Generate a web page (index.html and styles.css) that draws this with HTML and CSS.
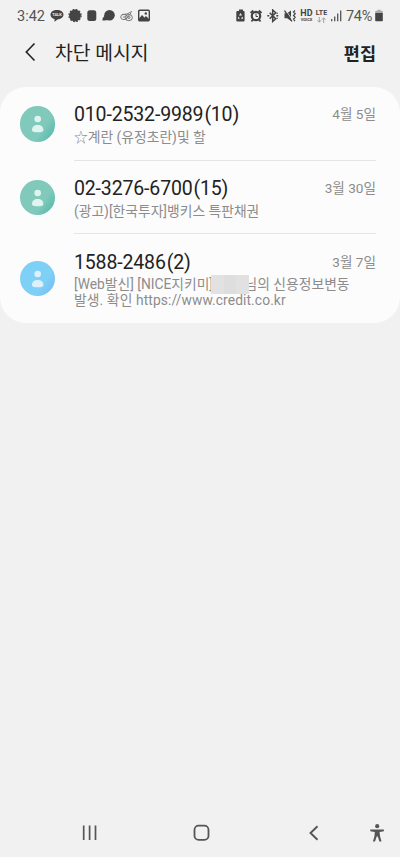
FILE: index.html
```html
<!DOCTYPE html>
<html lang="ko">
<head>
    <meta charset="UTF-8">
    <meta name="viewport" content="width=device-width, initial-scale=1.0">
    <title>차단 메시지</title>
    <link rel="stylesheet" href="styles.css">
</head>
<body>

    <!-- Shared avatar figure -->
    <svg class="defs" width="0" height="0">
        <symbol id="person" viewBox="0 0 36 36">
            <circle cx="17.7" cy="13" r="3.3"/>
            <path d="M12 24.3c0-3.5 2.200-5.300 5.700-5.300s5.700 1.800 5.700 5.300q0 2-5.700 2t-5.700-2z"/>
        </symbol>
    </svg>

    <!-- Status bar -->
    <div class="status-bar">
        <span class="clock">3:42</span>
        <div class="status-left">
            <svg width="14" height="14" viewBox="0 0 14 14">
                <path d="M7 .9c3.700 0 6.500 2 6.500 4.700S10.700 10.500 7.500 10.500L4.500 12.800V10.100C2.200 9.300.5 7.800.5 5.700.5 2.900 3.300.9 7 .9z" fill="#444"/>
                <text x="7" y="7.300" class="talk">TALK</text>
            </svg>
            <svg width="14" height="14" viewBox="0 0 14 14">
                <circle cx="7" cy="6.500" r="5.900" fill="#444"/>
                <circle cx="7" cy="6.500" r="6.100" fill="none" stroke="#444" stroke-width="1.200" stroke-dasharray="1.700 1.500"/>
            </svg>
            <svg class="square" width="10" height="14" viewBox="0 0 10 14">
                <rect x="0.300" y="1.200" width="9" height="10.800" rx="2.500" fill="#444"/>
            </svg>
            <svg width="14" height="14" viewBox="0 0 14 14">
                <circle cx="7.500" cy="6.200" r="5.300" fill="#444"/>
                <path d="M3.300 6Q.5 8.500.3 11.300q3 .5 6.500-.5z" fill="#444"/>
            </svg>
            <svg width="14" height="14" viewBox="0 0 14 14" fill="none" stroke="#777" stroke-width="1">
                <ellipse cx="4" cy="8" rx="3.300" ry="2.600"/>
                <ellipse cx="8.800" cy="8.600" rx="3.600" ry="3.100"/>
                <path d="M2 5.500l5-.5 5-2.500M6 10l5-6M3 8h2"/>
                <circle cx="9" cy="8.500" r="1"/>
            </svg>
            <svg width="12" height="14" viewBox="0 0 12 14">
                <rect x="0.700" y="1.200" width="10.600" height="10.600" rx="1" fill="none" stroke="#444" stroke-width="1.400"/>
                <path d="M1 11V9.500l3-3.500 2.500 2.500L8 7l3 3v1z" fill="#444"/>
                <circle cx="7.800" cy="4.500" r="1.200" fill="#444"/>
            </svg>
        </div>
        <div class="status-right">
            <svg width="10" height="14" viewBox="0 0 10 14">
                <path d="M3 .5h4V2h.6q1 0 1 1v8.500q0 1-1 1H1.300q-1 0-1-1V3q0-1 1-1H3z" fill="#444"/>
                <path d="M4.500 4L3 6.500h3zM2.600 7.500L1.800 9.800h2zM6.400 7.500L5 9.800h2.200z" fill="#eee"/>
            </svg>
            <svg width="13" height="14" viewBox="0 0 13 14" fill="none" stroke="#444">
                <circle cx="6" cy="7" r="4.200" stroke-width="2.200"/>
                <path d="M.6 4l2.700-2.500M11.500 4L8.800 1.500M3 10.500l-1.500 2M9 10.500l1.500 2" stroke-width="1.800"/>
                <path d="M6 4.500v3h2" stroke-width="1"/>
            </svg>
            <svg width="12" height="14" viewBox="0 0 12 14" fill="none" stroke="#444" stroke-width="1.500">
                <path d="M2.700 3.700l6 6-3 2.700V1l3 2.700-6 6"/>
                <path d="M.3 6.700h2M9.300 6.700h2M10.200 3.800v1M10.200 8.700v1"/>
            </svg>
            <svg class="mute" width="13" height="14" viewBox="0 0 13 14">
                <path d="M.5 4.200h2.700L7 1.500v10.500L3.200 9.300H.5z" fill="#444"/>
                <path d="M2 1.500l6 9" stroke="#f1f1f1" stroke-width="0.800"/>
                <path d="M.5 1.500l7.500 11" fill="none" stroke="#444" stroke-width="1.300"/>
                <path d="M11 1.500L9.500 3l1.700 1.800L9.500 6.500l1.700 1.800-1.700 1.800 1.500 2" fill="none" stroke="#444" stroke-width="1.200"/>
            </svg>
            <div class="network hd"><b>HD</b><span>VOICE</span></div>
            <div class="network lte">
                <b>LTE</b>
                <svg width="9" height="6" viewBox="0 0 9 6" fill="none" stroke="#999" stroke-width="0.900">
                    <path d="M2.300 0v5M.5 3.300l1.800 1.900 1.800-1.900M6.700 6V1M4.900 2.700L6.700.8l1.800 1.900"/>
                </svg>
            </div>
            <svg class="signal" width="11" height="14" viewBox="0 0 11 14" stroke="#555" stroke-width="1.300">
                <path d="M.7 10v2.200M3.700 7.500v4.700M6.700 4.500v7.700M9.700 1.500v10.700"/>
            </svg>
            <span class="percent">74%</span>
            <svg class="battery" width="8" height="14" viewBox="0 0 8 14">
                <path d="M2.500.8h3v1H7q.8 0 .8.800v1.700H.2V2.600q0-.8.800-.8h1.500z" fill="#aaa"/>
                <path d="M.2 4h7.600v7.500q0 .8-.8.800H1q-.8 0-.8-.8z" fill="#444"/>
            </svg>
        </div>
    </div>

    <!-- Title bar -->
    <div class="header">
        <svg class="back" width="12" height="20" viewBox="0 0 12 20">
            <path d="M10.500 1.500L2.300 10l8.200 8.500" fill="none" stroke="#222" stroke-width="1.600"/>
        </svg>
        <h1>차단 메시지</h1>
        <span class="edit">편집</span>
    </div>

    <!-- Blocked messages -->
    <div class="card">
        <div class="message">
            <div class="avatar green"><svg width="36" height="36"><use href="#person"/></svg></div>
            <div class="content">
                <div class="top-line">
                    <span class="number">010-2532-9989</span><span class="count">(10)</span>
                    <span class="date">4월 5일</span>
                </div>
                <p class="preview">☆계란 (유정초란)및 할</p>
            </div>
        </div>
        <div class="message">
            <div class="avatar green"><svg width="36" height="36"><use href="#person"/></svg></div>
            <div class="content">
                <div class="top-line">
                    <span class="number">02-3276-6700</span><span class="count">(15)</span>
                    <span class="date">3월 30일</span>
                </div>
                <p class="preview">(광고)[한국투자]뱅키스 특판채권</p>
            </div>
        </div>
        <div class="message tall">
            <div class="avatar blue"><svg width="36" height="36"><use href="#person"/></svg></div>
            <div class="content">
                <div class="top-line">
                    <span class="number">1588-2486</span><span class="count">(2)</span>
                    <span class="date">3월 7일</span>
                </div>
                <p class="preview">[Web발신] [NICE지키미]<span class="mosaic"></span>님의 신용정보변동<br><span class="url">발생. 확인 https://www.credit.co.kr</span></p>
            </div>
        </div>
    </div>

    <!-- Navigation bar -->
    <div class="nav-bar">
        <svg class="recents" width="16" height="18" viewBox="0 0 16 18" stroke="#555" stroke-width="1.700">
            <path d="M1.700 1.500v14.500M7.600 1.500v14.500M13.500 1.500v14.500"/>
        </svg>
        <svg class="home" width="18" height="18" viewBox="0 0 18 18">
            <rect x="1.500" y="1.700" width="14" height="14.200" rx="4.200" fill="none" stroke="#555" stroke-width="1.800"/>
        </svg>
        <svg class="nav-back" width="10" height="18" viewBox="0 0 10 18">
            <path d="M8.500 2.200L1.500 9l7 6.800" fill="none" stroke="#555" stroke-width="1.900"/>
        </svg>
        <svg class="access" width="16" height="18" viewBox="0 0 16 18" fill="#555">
            <circle cx="8.200" cy="2.200" r="2.100"/>
            <path d="M1.300 5.500h13.600v1.700l-4.300.8.400 4 1.500 5.400h-2.100L8.800 12.500H7.700L6 17.400H3.900l1.600-5.400.3-4-4.500-.8z"/>
        </svg>
    </div>

</body>
</html>
```
FILE: styles.css
```css
/* Global styles */
* {
    box-sizing: border-box;
}

body {
    margin: 0;
    height: 857px;
    display: flex;
    flex-direction: column;
    background-color: #f1f1f1;
    font-family: Roboto, "Noto Sans CJK KR", sans-serif;
    color: #222;
    overflow: hidden;
}

svg {
    display: block;
    flex: none;
}

.defs {
    display: none;
}

/* Status bar */
.status-bar {
    display: flex;
    align-items: center;
    height: 31px;
    padding: 0 17px;
    color: #555;
}

.clock {
    width: 33px;
    padding-top: 1px;
    font-size: 14.5px;
}

.status-left {
    display: flex;
    align-items: center;
    gap: 4px;
}

.square {
    margin: 0 1px;
}

.talk {
    font-size: 4px;
    font-weight: bold;
    fill: #eee;
    text-anchor: middle;
}

.status-right {
    display: flex;
    align-items: center;
    gap: 4px;
    margin-left: auto;
}

.mute {
    margin: 0 -1px 0 1px;
}

.network {
    display: flex;
    flex-direction: column;
    align-items: center;
    width: 13px;
    line-height: 8px;
    font-size: 9px;
    color: #444;
}

.network span {
    font-size: 4px;
    font-weight: bold;
    line-height: 5px;
}

.network.lte {
    font-size: 7px;
    margin-left: -2px;
}

.signal {
    margin-left: -1px;
}

.percent {
    padding-top: 1px;
    font-size: 14.5px;
    letter-spacing: -0.3px;
}

.battery {
    margin-left: -1px;
}

/* Title bar */
.header {
    display: flex;
    align-items: center;
    height: 42px;
    margin-bottom: 14px;
    padding: 0 24px;
}

h1 {
    margin: 4px 0 0 19px;
    font-size: 19.3px;
    font-weight: normal;
    line-height: 28px;
}

.edit {
    margin-left: auto;
    font-size: 17.5px;
    font-weight: bold;
}

/* Message list */
.card {
    background-color: #fcfcfc;
    border-radius: 26px;
}

.message {
    display: flex;
    align-items: center;
    height: 73.5px;
    padding: 0 24px 0 19.5px;
}

.message.tall {
    height: 89px;
}

.avatar {
    width: 35.5px;
    height: 35.5px;
    margin-right: 19px;
    border-radius: 50%;
    fill: #dff4f0;
}

.green {
    background: linear-gradient(125deg, #80c9bb 65%, #60bdb0 85%);
}

.blue {
    background: linear-gradient(125deg, #7fd0f6 65%, #78c2f4 85%);
    fill: #dcf1fc;
}

.content {
    flex: 1;
    height: 100%;
    padding-top: 15px;
    border-bottom: 1px solid #e4e4e4;
}

.tall .content {
    padding-top: 16px;
    border-bottom: none;
}

.top-line {
    display: flex;
    align-items: center;
    height: 25px;
    font-size: 19.5px;
    line-height: 25px;
}

.number {
    letter-spacing: -0.15px;
}

.count {
    margin-left: 1px;
    letter-spacing: -0.2px;
}

.date {
    margin-left: auto;
    font-size: 13.6px;
    color: #8c8c8c;
}

.preview {
    margin: 2px 0 0;
    font-size: 13.8px;
    line-height: 16px;
    color: #8c8c8c;
    white-space: nowrap;
}

.tall .preview {
    margin-top: 1px;
}

.url {
    letter-spacing: 0.1px;
}

/* Blurred-out name */
.mosaic {
    display: inline-block;
    position: relative;
    width: 38px;
    height: 19px;
    margin: -5px -4px -3px -2.5px;
    vertical-align: middle;
    background: linear-gradient(90deg, #e2e2e2 33%, #dedede 33% 66%, #e1e1e1 66%);
}

/* Navigation bar */
.nav-bar {
    display: flex;
    align-items: center;
    height: 48px;
    margin-top: auto;
    padding-left: 82px;
}

.home {
    margin-left: 95px;
}

.nav-back {
    margin-left: 98px;
}

.access {
    margin-left: 50px;
}
```
